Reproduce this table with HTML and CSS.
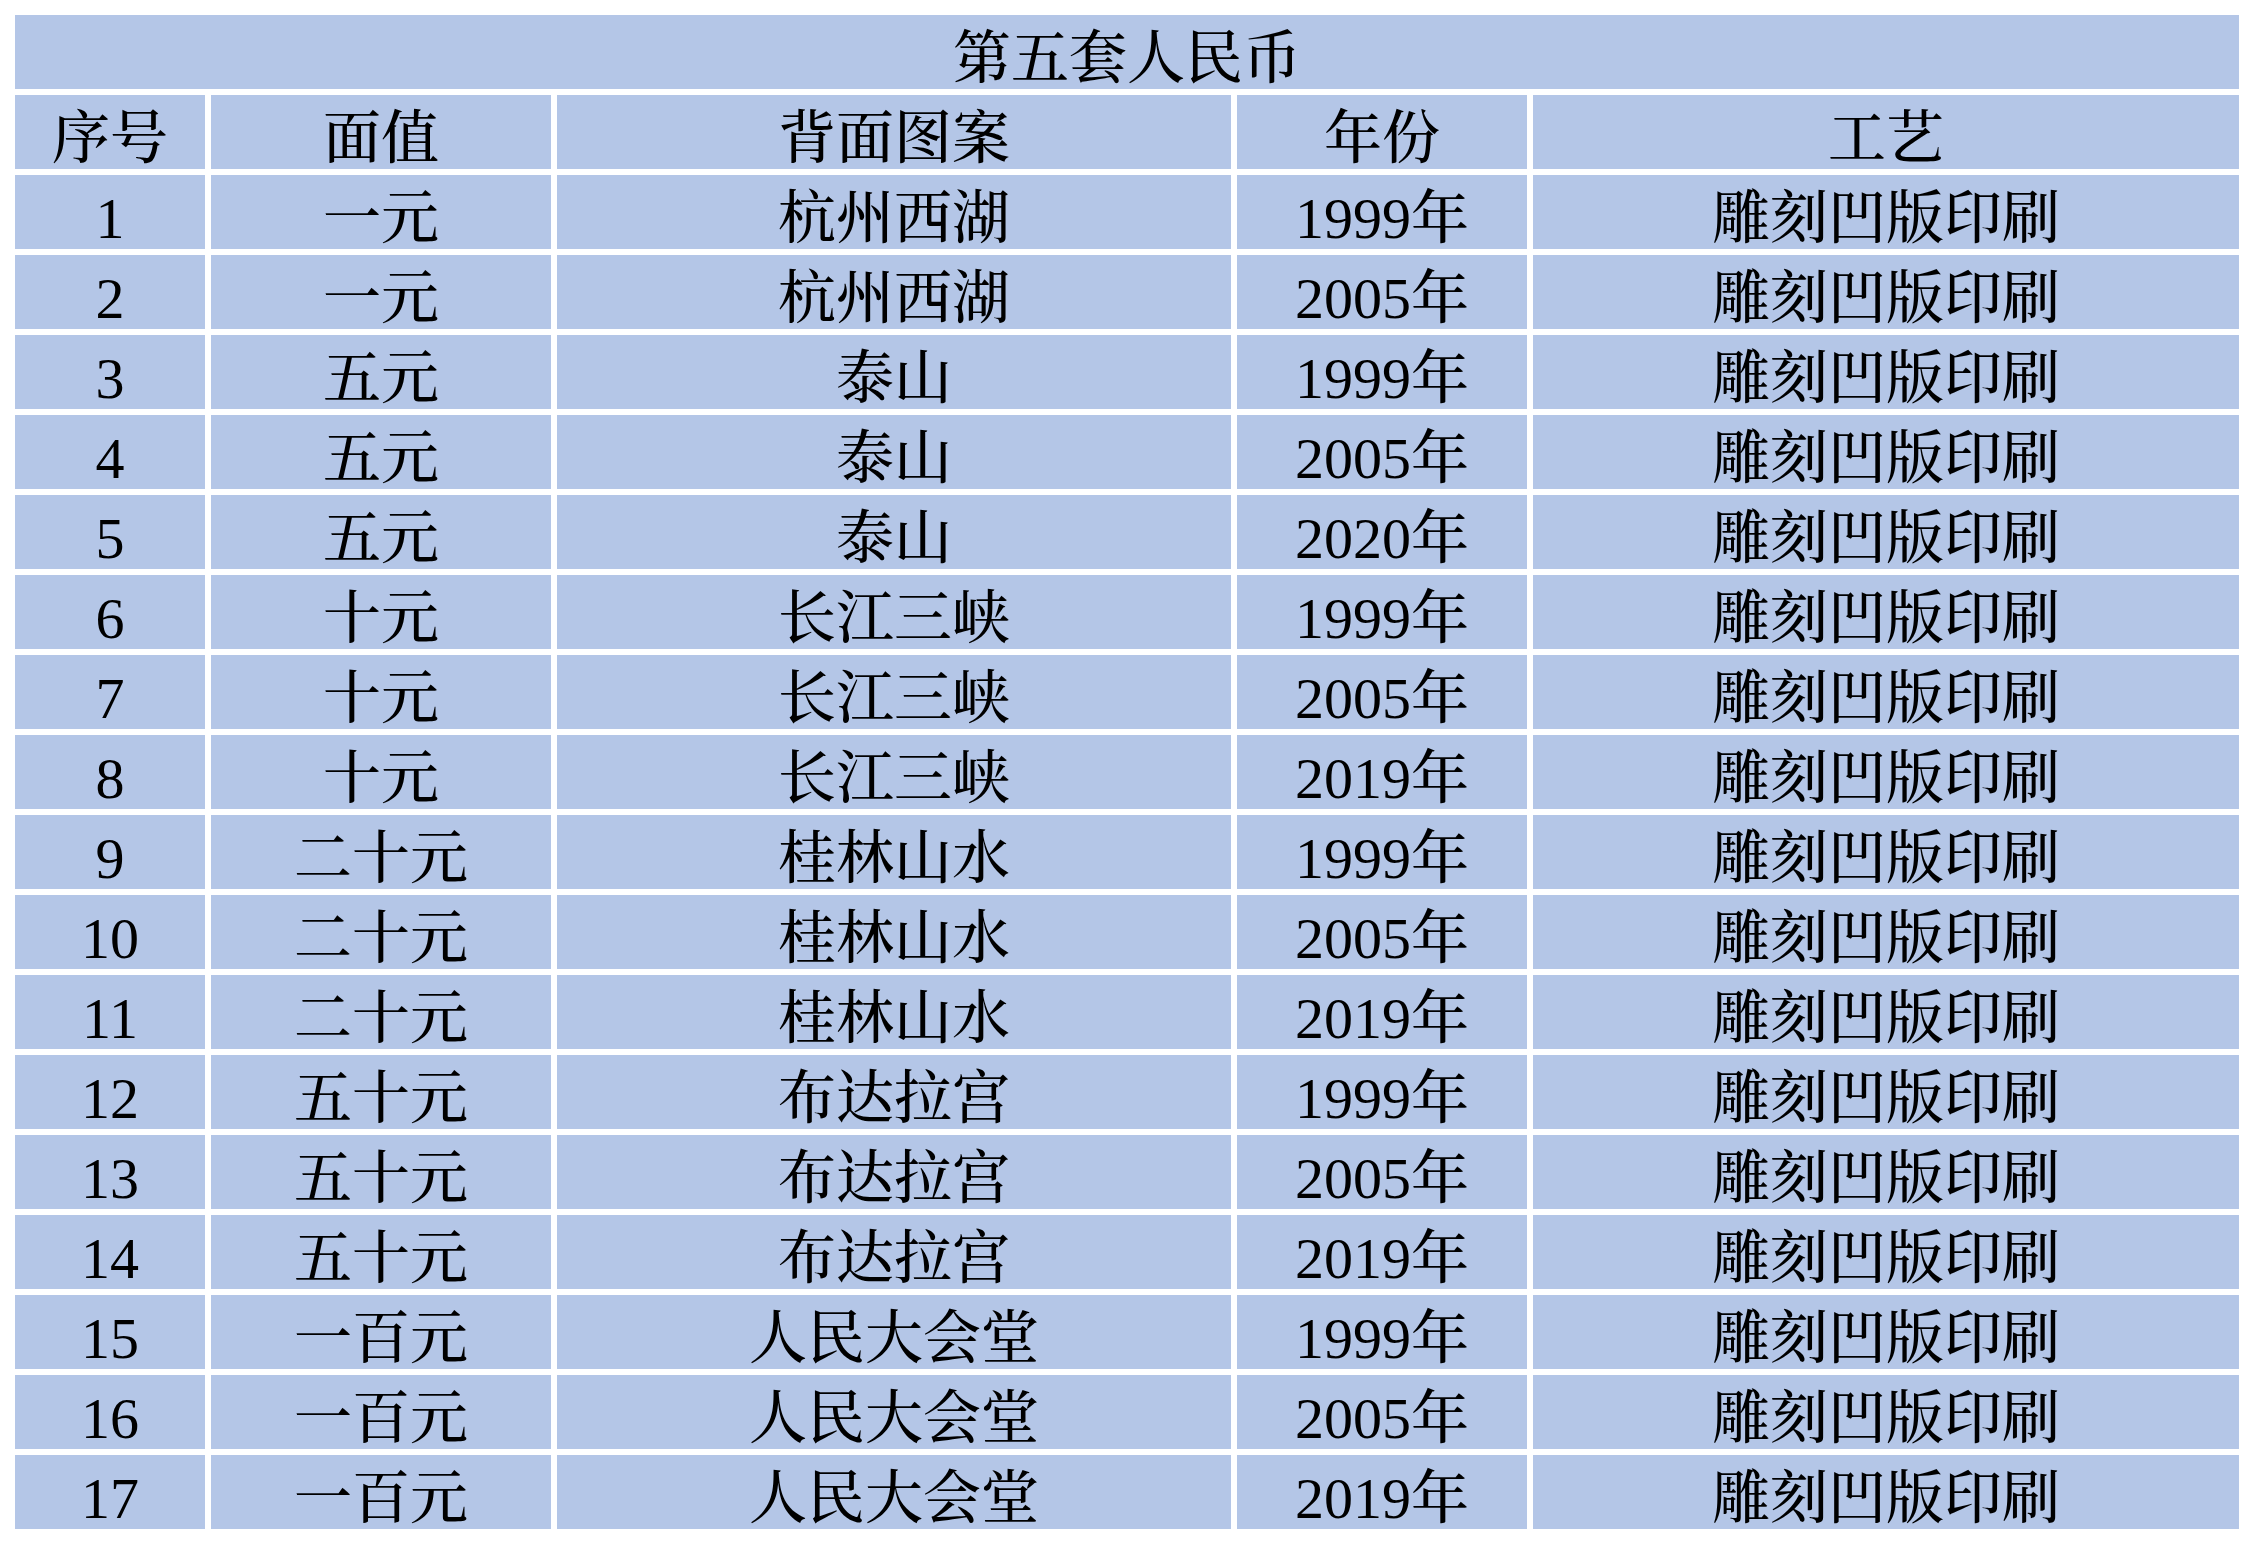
FILE: index.html
```html
<!DOCTYPE html>
<html lang="zh-CN">
<head>
<meta charset="utf-8">
<title>第五套人民币</title>
<link rel="stylesheet" href="styles.css">
</head>
<body>
<div class="sheet">
  <div class="cell title">第五套人民币</div>
  <div class="cell">序号</div><div class="cell">面值</div><div class="cell">背面图案</div><div class="cell">年份</div><div class="cell">工艺</div>
  <div class="cell">1</div><div class="cell">一元</div><div class="cell">杭州西湖</div><div class="cell">1999年</div><div class="cell">雕刻凹版印刷</div>
  <div class="cell">2</div><div class="cell">一元</div><div class="cell">杭州西湖</div><div class="cell">2005年</div><div class="cell">雕刻凹版印刷</div>
  <div class="cell">3</div><div class="cell">五元</div><div class="cell">泰山</div><div class="cell">1999年</div><div class="cell">雕刻凹版印刷</div>
  <div class="cell">4</div><div class="cell">五元</div><div class="cell">泰山</div><div class="cell">2005年</div><div class="cell">雕刻凹版印刷</div>
  <div class="cell">5</div><div class="cell">五元</div><div class="cell">泰山</div><div class="cell">2020年</div><div class="cell">雕刻凹版印刷</div>
  <div class="cell">6</div><div class="cell">十元</div><div class="cell">长江三峡</div><div class="cell">1999年</div><div class="cell">雕刻凹版印刷</div>
  <div class="cell">7</div><div class="cell">十元</div><div class="cell">长江三峡</div><div class="cell">2005年</div><div class="cell">雕刻凹版印刷</div>
  <div class="cell">8</div><div class="cell">十元</div><div class="cell">长江三峡</div><div class="cell">2019年</div><div class="cell">雕刻凹版印刷</div>
  <div class="cell">9</div><div class="cell">二十元</div><div class="cell">桂林山水</div><div class="cell">1999年</div><div class="cell">雕刻凹版印刷</div>
  <div class="cell">10</div><div class="cell">二十元</div><div class="cell">桂林山水</div><div class="cell">2005年</div><div class="cell">雕刻凹版印刷</div>
  <div class="cell">11</div><div class="cell">二十元</div><div class="cell">桂林山水</div><div class="cell">2019年</div><div class="cell">雕刻凹版印刷</div>
  <div class="cell">12</div><div class="cell">五十元</div><div class="cell">布达拉宫</div><div class="cell">1999年</div><div class="cell">雕刻凹版印刷</div>
  <div class="cell">13</div><div class="cell">五十元</div><div class="cell">布达拉宫</div><div class="cell">2005年</div><div class="cell">雕刻凹版印刷</div>
  <div class="cell">14</div><div class="cell">五十元</div><div class="cell">布达拉宫</div><div class="cell">2019年</div><div class="cell">雕刻凹版印刷</div>
  <div class="cell">15</div><div class="cell">一百元</div><div class="cell">人民大会堂</div><div class="cell">1999年</div><div class="cell">雕刻凹版印刷</div>
  <div class="cell">16</div><div class="cell">一百元</div><div class="cell">人民大会堂</div><div class="cell">2005年</div><div class="cell">雕刻凹版印刷</div>
  <div class="cell">17</div><div class="cell">一百元</div><div class="cell">人民大会堂</div><div class="cell">2019年</div><div class="cell">雕刻凹版印刷</div>
</div>
</body>
</html>
```

FILE: styles.css
```css
html, body {
  margin: 0;
  padding: 0;
  background: #ffffff;
}

body {
  padding: 15px;
  font-family: "Liberation Serif", "Noto Serif CJK SC", "Noto Sans CJK SC", serif;
  color: #000000;
}

.sheet {
  display: grid;
  grid-template-columns: 190px 340px 674px 290px 706px;
  grid-auto-rows: 74px;
  gap: 6px;
}

.cell {
  background: #b4c6e7;
  display: flex;
  align-items: center;
  justify-content: center;
  font-size: 58px;
  font-weight: 500;
  line-height: 1;
  padding-top: 14px;
  box-sizing: border-box;
  white-space: nowrap;
}

.title {
  grid-column: 1 / -1;
}
```
